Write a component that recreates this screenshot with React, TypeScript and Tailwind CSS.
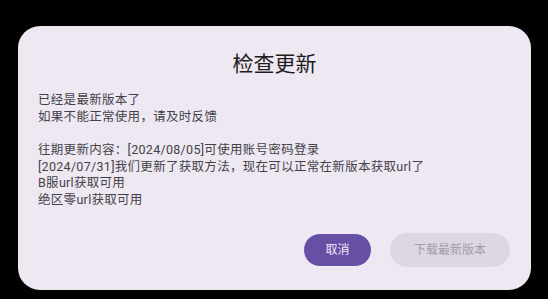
const notes = [
  "已经是最新版本了",
  "如果不能正常使用，请及时反馈",
  "",
  "往期更新内容：[2024/08/05]可使用账号密码登录",
  "[2024/07/31]我们更新了获取方法，现在可以正常在新版本获取url了",
  "B服url获取可用",
  "绝区零url获取可用",
];

export default function App() {
  return (
    <div
      className="h-[299px] w-[548px] overflow-hidden bg-black pl-[18px] pt-[26px]"
      style={{ fontFamily: 'Roboto, "Noto Sans CJK SC", "Noto Sans", sans-serif' }}
    >
      <div className="flex h-[264px] w-[513px] flex-col rounded-[22px] bg-[#eee8f3] px-[20px] pb-[23px] pt-[22px]">
        <h1
          className="text-center text-[21px] leading-[28px] text-[#1d1b20]"
          style={{ fontFamily: '"Noto Sans CJK SC", sans-serif' }}
        >
          检查更新
        </h1>

        <div className="mt-[16px] text-[12.5px] leading-[16.7px] tracking-[0.3px] text-[#444149]">
          {notes.map((line, i) => (
            <p key={i} className="h-[16.7px] whitespace-nowrap">
              {line}
            </p>
          ))}
        </div>

        <div className="mt-auto flex justify-end gap-[18px] pr-[1px]">
          <button className="h-[34px] w-[69px] rounded-full border border-[#f3eefa] bg-[#6750a4] text-[12px] text-[#efe8fb]">
            取消
          </button>
          <button className="h-[34px] w-[120px] rounded-full bg-[#dcd7e1] text-[12px] text-[#a19da7]">
            下载最新版本
          </button>
        </div>
      </div>
    </div>
  );
}
